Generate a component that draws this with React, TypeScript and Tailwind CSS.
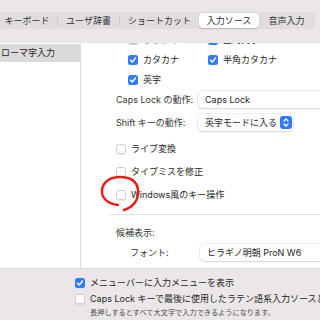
import React from "react";

const FONT = { fontFamily: 'Inter, "Noto Sans CJK JP", sans-serif' };

function Check({ checked, disabled }: { checked?: boolean; disabled?: boolean }) {
  if (checked) {
    return (
      <div
        className={`w-[10px] h-[10px] rounded-[2.5px] flex items-center justify-center shrink-0 ${
          disabled ? "bg-[#c9cdd3]" : "bg-[#2f7cf6]"
        }`}
      >
        <svg width="10" height="10" viewBox="0 0 10 10">
          <path d="M2.6 5.2 L4.3 7 L7.5 3" fill="none" stroke="white" strokeWidth="1.5" strokeLinecap="round" strokeLinejoin="round" />
        </svg>
      </div>
    );
  }
  return (
    <div className="w-[10px] h-[10px] rounded-[2.5px] bg-white border border-[#cdcdcd] shadow-[0_0.5px_1px_rgba(0,0,0,0.08)] shrink-0" />
  );
}

function Popup({ text, width, stepper }: { text: string; width: string; stepper?: boolean }) {
  return (
    <div
      className={`${width} h-[17px] bg-white rounded-[4px] shadow-[0_0_0_0.5px_rgba(0,0,0,0.14),0_1px_1.5px_rgba(0,0,0,0.1)] flex items-center pl-[7px] pr-[1px] shrink-0`}
    >
      <span className="flex-1 text-[9px] text-[#262626] whitespace-nowrap">{text}</span>
      {stepper && (
        <div className="w-[12px] h-[13px] rounded-[3px] bg-[#2f7cf6] flex items-center justify-center">
          <svg width="8" height="11" viewBox="0 0 8 11">
            <path d="M2 4 L4 2 L6 4 M2 7 L4 9 L6 7" fill="none" stroke="white" strokeWidth="1.2" strokeLinecap="round" strokeLinejoin="round" />
          </svg>
        </div>
      )}
    </div>
  );
}

function Sep() {
  return <div className="w-[1px] h-[10px] bg-[#cfcbcd]" />;
}

export default function App() {
  return (
    <div className="relative w-[320px] h-[320px] overflow-hidden bg-[#ebe7e9] text-[#262626]" style={FONT}>
      {/* segmented control */}
      <div className="h-[43px] pt-[12px] flex">
        <div className="ml-[-4px] flex items-center h-[17px] rounded-[5px] bg-[#e0dcdf] px-[1px] text-[9px] text-[#333] shrink-0">
          <div className="w-[60px] text-center">キーボード</div>
          <Sep />
          <div className="w-[61px] text-center">ユーザ辞書</div>
          <Sep />
          <div className="w-[79px] text-center">ショートカット</div>
          <div className="w-[60px] h-[15px] bg-white rounded-[4px] shadow-[0_0.5px_1.5px_rgba(0,0,0,0.18)] flex items-center justify-center">
            入力ソース
          </div>
          <div className="w-[55px] text-center">音声入力</div>
        </div>
      </div>

      {/* main */}
      <div className="flex h-[225px]">
        <div className="w-[81px] bg-white border-r border-[#dcdcdc] shrink-0">
          <div className="mt-[1px] h-[18px] bg-[#dcdadb] flex items-center pl-[1px] text-[9px] whitespace-nowrap">
            ローマ字入力
          </div>
        </div>
        <div className="flex-1 bg-white overflow-hidden">
          <div className="mt-[-13px] pl-[47px]">
            <div className="h-[20px] flex items-center">
              <div className="w-[80px] flex items-center gap-[5px] shrink-0">
                <Check checked disabled />
                <span className="text-[9px] text-[#9a9a9a]">ひらがな</span>
              </div>
              <div className="flex items-center gap-[5px]">
                <Check checked />
                <span className="text-[9px] text-[#262626]">全角英字</span>
              </div>
            </div>
            <div className="h-[20px] flex items-center">
              <div className="w-[80px] flex items-center gap-[5px] shrink-0">
                <Check checked />
                <span className="text-[9px]">カタカナ</span>
              </div>
              <div className="flex items-center gap-[5px]">
                <Check checked />
                <span className="text-[9px]">半角カタカナ</span>
              </div>
            </div>
            <div className="h-[20px] flex items-center gap-[5px]">
              <Check checked />
              <span className="text-[9px]">英字</span>
            </div>
          </div>

          <div className="pl-[35px]">
            <div className="mt-[1px] h-[17px] flex items-center">
              <span className="w-[82px] shrink-0 text-[9px] text-[#333] whitespace-nowrap">Caps Lock の動作:</span>
              <Popup text="Caps Lock" width="w-[150px]" />
            </div>
            <div className="mt-[6px] h-[17px] flex items-center">
              <span className="w-[82px] shrink-0 text-[9px] text-[#333] whitespace-nowrap">Shift キーの動作:</span>
              <Popup text="英字モードに入る" width="w-[95px]" stepper />
            </div>
            <div className="mt-[6px] h-[23px] flex items-center gap-[5px]">
              <Check />
              <span className="text-[9px]">ライブ変換</span>
            </div>
            <div className="h-[23px] flex items-center gap-[5px]">
              <Check />
              <span className="text-[9px]">タイプミスを修正</span>
            </div>
            <div className="h-[23px] flex items-center gap-[5px]">
              <Check />
              <span className="text-[9px]">Windows風のキー操作</span>
            </div>
          </div>

          <div className="mt-[8px] ml-[28px] border-t border-[#e2e2e2]" />

          <div className="pl-[35px]">
            <div className="mt-[11px] h-[14px] flex items-center text-[9px] text-[#333]">候補表示:</div>
            <div className="mt-[4px] h-[17px] flex items-center">
              <span className="w-[84px] shrink-0 pl-[14px] text-[9px] text-[#333]">フォント:</span>
              <Popup text="ヒラギノ明朝 ProN W6" width="w-[150px]" />
            </div>
          </div>
        </div>
      </div>

      {/* bottom */}
      <div className="border-t border-[#d9d5d7] pl-[75px]">
        <div className="mt-[6px] h-[16px] flex items-center gap-[5px]">
          <Check checked />
          <span className="text-[9px] whitespace-nowrap">メニューバーに入力メニューを表示</span>
        </div>
        <div className="h-[16px] flex items-center gap-[5px]">
          <Check />
          <span className="text-[9px] whitespace-nowrap">Caps Lock キーで最後に使用したラテン語系入力ソースと切り替える</span>
        </div>
        <div className="h-[12px] flex items-center pl-[15px]">
          <span className="text-[7.2px] text-[#4a4a4a] whitespace-nowrap">長押しするとすべて大文字で入力できるようになります。</span>
        </div>
      </div>

      {/* red hand-drawn annotation */}
      <svg className="absolute left-0 top-0 pointer-events-none" width="320" height="320" viewBox="0 0 320 320">
        <path
          d="M118 205 C108 204 101 198 102 190 C103 182 110 177 120 177 C130 177 137 181 138 190 C139 199 134 207 124 210"
          fill="none"
          stroke="#ee1a12"
          strokeWidth="2.4"
          strokeLinecap="round"
        />
      </svg>
    </div>
  );
}
